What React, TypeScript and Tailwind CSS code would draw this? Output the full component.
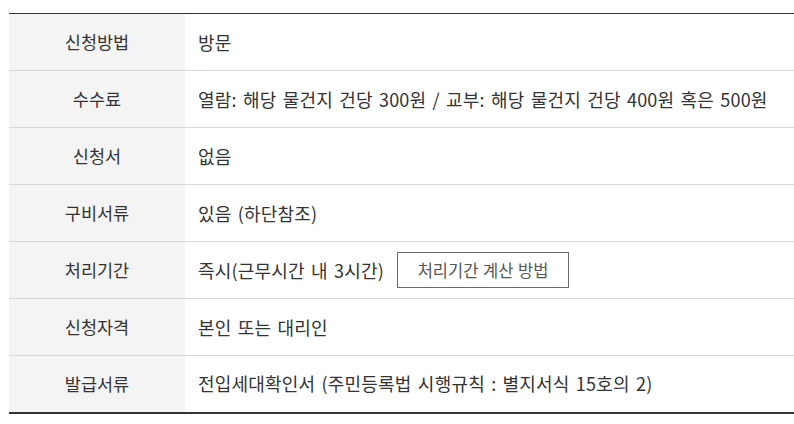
import React from 'react';

const rows: { label: string; value: React.ReactNode }[] = [
  { label: '신청방법', value: '방문' },
  { label: '수수료', value: '열람: 해당 물건지 건당 300원 / 교부: 해당 물건지 건당 400원 혹은 500원' },
  { label: '신청서', value: '없음' },
  { label: '구비서류', value: '있음 (하단참조)' },
  {
    label: '처리기간',
    value: (
      <div className="flex items-center">
        <span>즉시(근무시간 내 3시간)</span>
        <button
          type="button"
          className="ml-[13px] h-[36px] w-[172px] border border-[#6b6b6b] text-[16.5px] text-[#555] tracking-normal [word-spacing:1px]"
        >
          처리기간 계산 방법
        </button>
      </div>
    ),
  },
  { label: '신청자격', value: '본인 또는 대리인' },
  { label: '발급서류', value: '전입세대확인서 (주민등록법 시행규칙 : 별지서식 15호의 2)' },
];

export default function App() {
  return (
    <div
      className="w-[794px] h-[424px] bg-white pt-[13px] pl-[9px]"
      style={{ fontFamily: '"Noto Sans CJK KR", "Noto Sans", sans-serif' }}
    >
      <table className="w-[785px] border-collapse border-t border-t-[#333] border-b-2 border-b-[#333]">
        <tbody>
          {rows.map((row, i) => (
            <tr
              key={row.label}
              className={i < rows.length - 1 ? 'border-b border-[#d6d6d6]' : ''}
            >
              <th className="w-[176px] h-[57px] bg-[#f4f4f4] text-center font-normal text-[17.5px] text-[#333] p-0">
                {row.label}
              </th>
              <td className="h-[57px] pl-[13px] text-[18px] text-[#333] tracking-[0.2px] [word-spacing:2px] p-0">
                {row.value}
              </td>
            </tr>
          ))}
        </tbody>
      </table>
    </div>
  );
}
